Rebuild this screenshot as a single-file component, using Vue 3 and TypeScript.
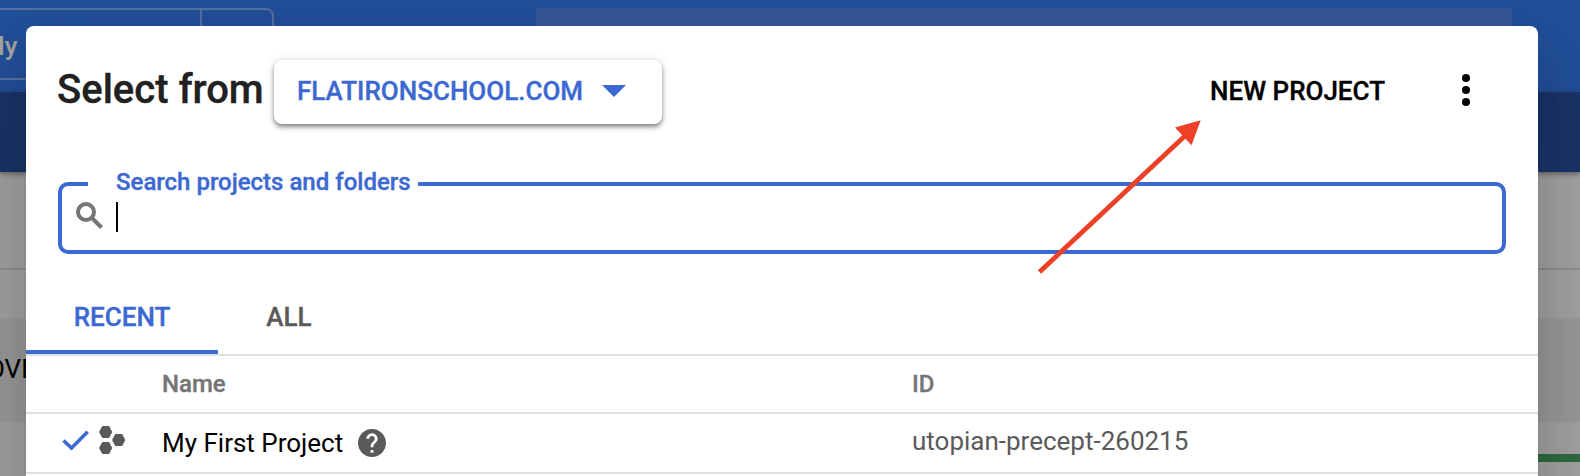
<script setup lang="ts">
import { ref } from 'vue'

interface Project {
  name: string
  id: string
}

const organization = 'FLATIRONSCHOOL.COM'
const tabs = ['RECENT', 'ALL']
const activeTab = ref('RECENT')
const projects: Project[] = [{ name: 'My First Project', id: 'utopian-precept-260215' }]
</script>

<template>
  <div class="scene">
    <div class="page">
      <div class="topbar">
        <div class="picker"><span>ly</span><i></i></div>
        <div class="topsearch"></div>
      </div>
      <div class="subbar"></div>
      <div class="page-body">
        <div class="crumbs"></div>
        <div class="gap"></div>
        <div class="band"><span>OVE</span></div>
        <div class="cards"><div class="green"></div></div>
      </div>
    </div>

    <section class="dialog">
      <header class="head">
        <h1>Select from</h1>
        <button class="org">
          <span>{{ organization }}</span>
          <svg width="24" height="12" viewBox="0 0 24 12"><path d="M0 0H24L12 12Z" fill="#3c69d1" /></svg>
        </button>
        <button class="new">NEW PROJECT</button>
        <svg class="more" width="8" height="32" viewBox="0 0 8 32">
          <circle cx="4" cy="4" r="4" /><circle cx="4" cy="16" r="4" /><circle cx="4" cy="28" r="4" />
        </svg>
      </header>

      <div class="search">
        <span class="label">Search projects and folders</span>
        <svg class="glass" width="28" height="28" viewBox="0 0 28 28" fill="none" stroke="#757575">
          <circle cx="10" cy="10" r="8" stroke-width="4" />
          <path d="M15.5 15.5L25.5 25.5" stroke-width="4" />
        </svg>
        <span class="caret"></span>
      </div>

      <nav class="tabs">
        <button
          v-for="tab in tabs"
          :key="tab"
          class="tab"
          :class="{ active: tab === activeTab }"
          @click="activeTab = tab"
        >{{ tab }}</button>
      </nav>

      <div class="row columns"><span>Name</span><span>ID</span></div>
      <div v-for="project in projects" :key="project.id" class="row project">
        <svg class="check" width="28" height="22" viewBox="0 0 28 22" fill="none">
          <path d="M1.500 10.500L9.500 18L25.700 1.700" stroke="#3c69d1" stroke-width="3.6" />
        </svg>
        <svg class="hexes" width="27" height="28" viewBox="0 0 27 28" fill="#5a5a5a">
          <path d="M3.300 0H10.100L13.200 6L10.100 12H3.300L0 6Z" />
          <path d="M3.300 16H10.100L13.200 22L10.100 28H3.300L0 22Z" />
          <path d="M16.300 8H23.100L26.300 14L23.100 20H16.300L13 14Z" />
        </svg>
        <span class="name">{{ project.name }}
          <svg class="help" width="28" height="28" viewBox="2 2 20 20" fill="#5a5a5a">
            <path d="M12 2C6.480 2 2 6.480 2 12s4.480 10 10 10 10-4.480 10-10S17.520 2 12 2zm1 17h-2v-2h2v2zm2.070-7.750l-.9.920C13.450 12.900 13 13.500 13 15h-2v-.5c0-1.100.450-2.100 1.170-2.830l1.240-1.260c.370-.360.590-.860.590-1.410 0-1.100-.9-2-2-2s-2 .9-2 2H8c0-2.210 1.790-4 4-4s4 1.790 4 4c0 .880-.360 1.680-.930 2.250z" />
          </svg>
        </span>
        <span class="id">{{ project.id }}</span>
      </div>
    </section>

    <svg class="arrow" width="166" height="156" viewBox="0 0 166 156">
      <path d="M2.500 152L150 14" stroke="#ed4026" stroke-width="4.8" />
      <path d="M163.700 0.200L154.500 25.200L138 7.500Z" fill="#ed4026" />
    </svg>
  </div>
</template>

<style>
body {
  margin: 0;
  overflow: hidden;
}
</style>

<style scoped>
.scene {
  position: relative;
  width: 1580px;
  height: 476px;
  overflow: hidden;
  font-family: Roboto, 'Liberation Sans', sans-serif;
  font-size: 26px;
  color: #000;
}
.scene * {
  box-sizing: border-box;
}
svg {
  flex: none;
  display: block;
}
.page {
  height: 476px;
  background: #a0a0a0;
}
.topbar {
  height: 92px;
  display: flex;
  align-items: flex-start;
  padding-top: 8px;
  background: #224f9a;
}
.picker {
  width: 284px;
  height: 72px;
  margin-left: -10px;
  display: flex;
  justify-content: space-between;
  border: 2px solid #57709f;
  border-radius: 8px;
  color: #a6a6a0;
  font-weight: 500;
  line-height: 72px;
}
.picker span {
  padding-left: 6px;
}
.picker i {
  width: 72px;
  border-left: 2px solid #57709f;
}
.topsearch {
  width: 976px;
  height: 72px;
  margin-left: 262px;
  border-radius: 4px;
  background: #355795;
}
.subbar {
  position: relative;
  height: 80px;
  background: #193467;
  box-shadow: 0 2px 5px rgba(0, 0, 0, 0.4);
}
.crumbs {
  height: 98px;
  border-bottom: 2px solid #8d8d8d;
}
.gap {
  height: 48px;
}
.band {
  height: 104px;
  background: #979797;
  line-height: 102px;
}
.band span {
  margin-left: -13px;
}
.cards {
  display: flex;
  justify-content: flex-end;
  padding-top: 32px;
}
.green {
  width: 200px;
  height: 8px;
  background: #2f6a40;
}
.dialog {
  position: absolute;
  left: 26px;
  top: 26px;
  width: 1512px;
  height: 700px;
  border-radius: 8px;
  background: #fff;
  box-shadow: 0 22px 30px -14px rgba(0, 0, 0, 0.1), 0 48px 76px 6px rgba(0, 0, 0, 0.08), 0 18px 60px 8px rgba(0, 0, 0, 0.1);
}
button {
  padding: 0;
  border: 0;
  background: none;
  font: 500 26px Roboto, 'Liberation Sans', sans-serif;
}
h1,
button,
.label,
.columns {
  -webkit-text-stroke: 0.35px currentColor;
}
.head {
  height: 98px;
  display: flex;
  align-items: flex-start;
  padding: 34px 68px 0 31px;
}
h1 {
  width: 217px;
  margin: 0;
  font-size: 40px;
  font-weight: 500;
  line-height: 60px;
  white-space: nowrap;
  color: #212121;
}
.org {
  width: 388px;
  height: 64px;
  display: flex;
  align-items: center;
  justify-content: space-between;
  padding: 0 36px 2px 23px;
  border-radius: 8px;
  color: #3c69d1;
  box-shadow: 0 3px 4px rgba(0, 0, 0, 0.4), 0 1px 10px rgba(0, 0, 0, 0.16);
}
.new {
  margin-left: auto;
  line-height: 62px;
}
.more {
  margin: 14px 0 0 77px;
}
.search {
  position: relative;
  display: flex;
  width: 1448px;
  height: 72px;
  margin: 58px 0 0 32px;
  padding: 16px 14px;
  border: 4px solid #3c69d1;
  border-radius: 10px;
}
.label {
  position: absolute;
  left: 26px;
  top: -21px;
  width: 330px;
  padding-left: 28px;
  background: #fff;
  font-size: 24px;
  font-weight: 500;
  line-height: 34px;
  white-space: nowrap;
  color: #3c69d1;
}
.caret {
  width: 2px;
  height: 30px;
  margin-left: 12px;
  background: #000;
}
.tabs {
  height: 102px;
  display: flex;
  padding-top: 30px;
  border-bottom: 2px solid #e0e0e0;
}
.tab {
  width: 192px;
  height: 70px;
  border-bottom: 4px solid transparent;
  color: #5a5a5a;
}
.tab + .tab {
  width: 142px;
}
.tab.active {
  color: #3c69d1;
  border-color: #3c69d1;
}
.row {
  display: grid;
  align-items: center;
  border-bottom: 2px solid #e0e0e0;
}
.columns {
  grid-template-columns: 750px 1fr;
  height: 58px;
  padding-left: 136px;
  font-size: 24px;
  font-weight: 500;
  color: #757575;
}
.project {
  grid-template-columns: 37px 63px 750px 1fr;
  height: 60px;
  padding-left: 36px;
}
.check {
  margin-bottom: 4px;
}
.hexes {
  margin-bottom: 6px;
}
.name {
  display: flex;
  align-items: center;
  gap: 15px;
  margin-bottom: 1px;
}
.id {
  color: #5a5a5a;
  margin-bottom: 5px;
}
.arrow {
  position: absolute;
  left: 1037px;
  top: 120px;
}
</style>
